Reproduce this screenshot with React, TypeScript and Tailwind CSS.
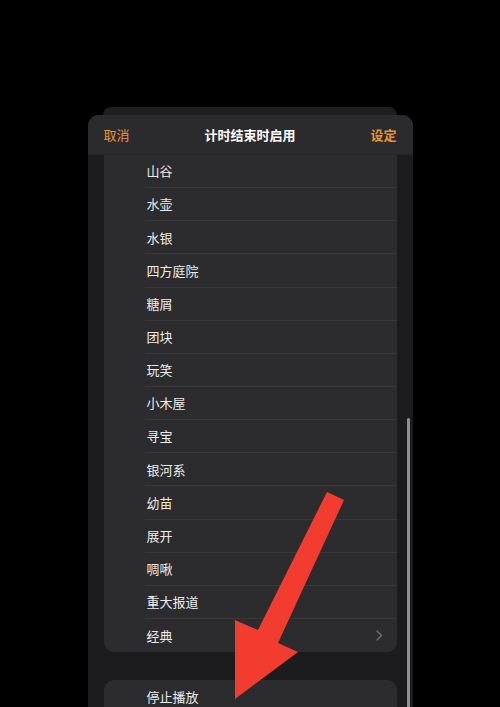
import React from 'react'

const sounds = [
  '山谷',
  '水壶',
  '水银',
  '四方庭院',
  '糖屑',
  '团块',
  '玩笑',
  '小木屋',
  '寻宝',
  '银河系',
  '幼苗',
  '展开',
  '啁啾',
  '重大报道',
  '经典',
]

export default function App() {
  return (
    <div
      className="relative h-[707px] w-[500px] overflow-hidden bg-black pt-[107px]"
      style={{ fontFamily: '"Noto Sans CJK SC", "Noto Sans", sans-serif' }}
    >
      {/* sheet behind */}
      <div className="mx-auto h-[8px] w-[294px] rounded-t-[10px] bg-[#1e1e20]" />

      {/* sheet */}
      <div className="relative mx-auto h-[600px] w-[325px] overflow-hidden rounded-t-[11px] bg-[#1c1c1e]">
        <div className="flex h-[40px] items-center justify-between border-b border-[#262628] bg-[#2b2b2d] px-[16px] text-[13px]">
          <button className="text-[#e8952f]">取消</button>
          <span className="font-bold text-white">计时结束时启用</span>
          <button className="font-bold text-[#e8952f]">设定</button>
        </div>

        <div className="px-[16px]">
          <div className="rounded-b-[10px] bg-[#2c2c2e]">
            {sounds.map((name, i) => (
              <div key={name} className="flex h-[33.15px] flex-col">
                <div className="flex flex-1 items-center justify-between pl-[43px] pr-[14px] text-[13px] text-[#ececec]">
                  <span>{name}</span>
                  {i === sounds.length - 1 && (
                    <svg width="7" height="11" viewBox="0 0 7 11" fill="none">
                      <path d="M1 1l4.5 4.5L1 10" stroke="#6b6b70" strokeWidth="1.5" strokeLinecap="round" strokeLinejoin="round" />
                    </svg>
                  )}
                </div>
                {i < sounds.length - 1 && <div className="ml-[41px] h-px bg-[#38383a]" />}
              </div>
            ))}
          </div>

          <div className="mt-[28px] rounded-t-[10px] bg-[#2c2c2e]">
            <div className="flex h-[33px] items-center pl-[43px] text-[13px] text-[#ececec]">停止播放</div>
          </div>
        </div>

        {/* scroll indicator */}
        <div className="absolute right-[3px] top-[303px] h-[300px] w-[2.5px] rounded-full bg-[#8e8e93]" />
      </div>

      {/* red annotation arrow */}
      <svg className="absolute left-0 top-0" width="500" height="707" viewBox="0 0 500 707">
        <polygon
          points="327,492 344,500 278,643 298,652 235,699 235,620 258,630"
          fill="#f23c30"
        />
      </svg>
    </div>
  )
}
